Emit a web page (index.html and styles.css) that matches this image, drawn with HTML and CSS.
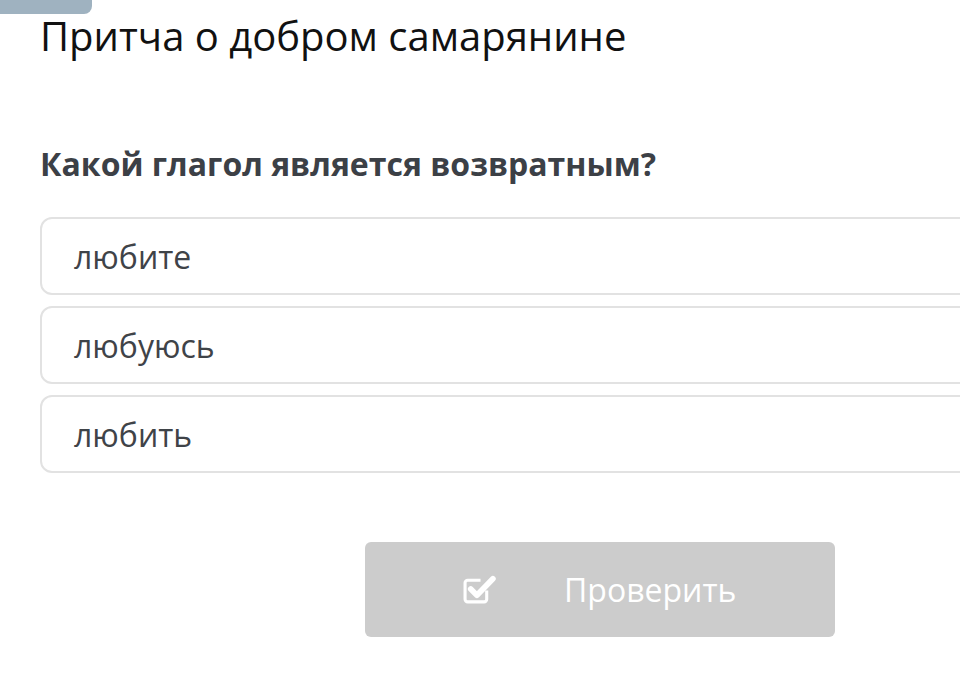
FILE: index.html
```html
<!DOCTYPE html>
<html lang="ru">
<head>
  <meta charset="UTF-8" />
  <meta name="viewport" content="width=device-width, initial-scale=1.0" />
  <title>Притча о добром самарянине</title>
  <link rel="stylesheet" href="styles.css">
</head>
<body>
  <div class="tab"></div>
  <div class="page">
    <h1 class="lesson-title">Притча о добром самарянине</h1>

    <h2 class="question">Какой глагол является возвратным?</h2>

    <div class="options">
      <div class="option">любите</div>
      <div class="option">любуюсь</div>
      <div class="option">любить</div>
    </div>

    <div class="actions">
      <button class="check-btn" disabled>
        <svg class="check-icon" viewBox="0 0 32 32" width="33" height="33">
          <path d="M23 17v8.5a2.5 2.5 0 0 1-2.5 2.5h-16A2.5 2.5 0 0 1 2 25.5v-16A2.5 2.5 0 0 1 4.5 7H17" fill="none" stroke="#fff" stroke-width="3" stroke-linejoin="round"/>
          <path d="M7.5 15.5l6 6L29 5.5" fill="none" stroke="#fff" stroke-width="5.5" stroke-linecap="round" stroke-linejoin="round"/>
        </svg>
        <span>Проверить</span>
      </button>
    </div>
  </div>
</body>
</html>
```

FILE: styles.css
```css
:root {
  --tab: #9fb2c0;
  --title: #111;
  --text: #3c4046;
  --border: #e2e2e2;
  --disabled: #cccccc;
}

body {
  margin: 0;
  font-family: 'Open Sans', 'Noto Sans', sans-serif;
  background: #fff;
  overflow: hidden;
}

.tab {
  width: 92px;
  height: 14px;
  background: var(--tab);
  border-bottom-right-radius: 8px;
}

.page {
  padding: 0 0 0 40px;
}

.lesson-title {
  margin: 0;
  font-size: 40px;
  font-weight: 400;
  line-height: 44px;
  color: var(--title);
}

.question {
  margin: 86px 0 0;
  font-size: 32px;
  font-weight: 700;
  line-height: 40px;
  color: var(--text);
}

.options {
  margin-top: 33px;
  display: flex;
  flex-direction: column;
  gap: 11px;
}

.option {
  height: 74px;
  margin-right: -40px;
  border: 2px solid var(--border);
  border-radius: 12px;
  padding: 0 32px;
  display: flex;
  align-items: center;
  font-size: 32px;
  color: #3f4348;
}

.actions {
  margin-top: 69px;
  padding-left: 325px;
}

.check-btn {
  width: 470px;
  height: 95px;
  border: none;
  border-radius: 6px;
  background: var(--disabled);
  color: #fff;
  font-family: inherit;
  font-size: 32px;
  display: flex;
  align-items: center;
  padding: 0 0 0 98px;
  gap: 68px;
}

.check-icon {
  flex: none;
}
```
